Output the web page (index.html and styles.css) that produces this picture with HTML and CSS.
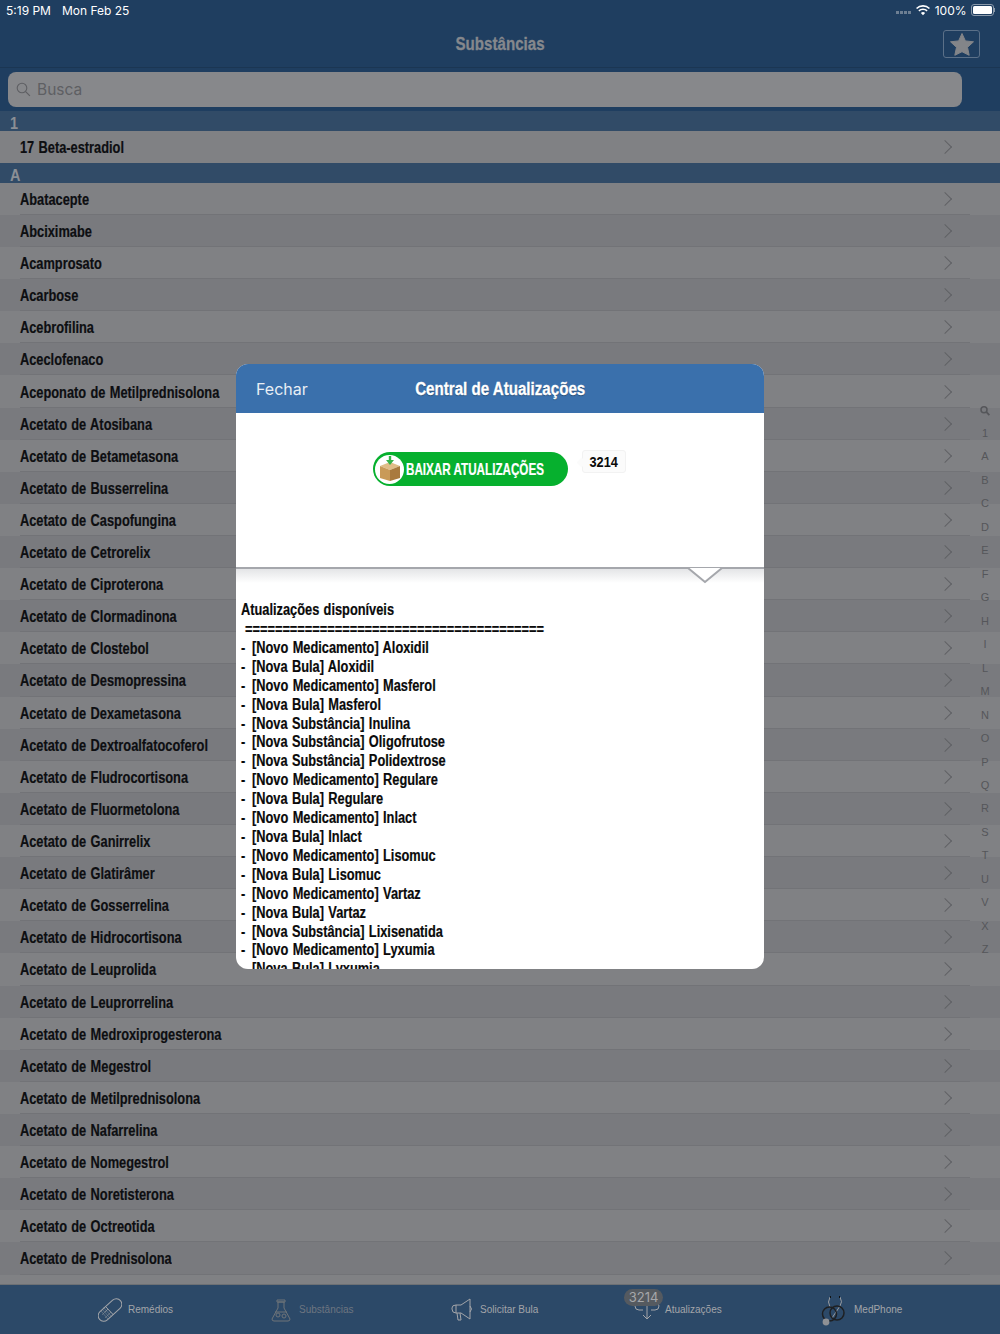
FILE: index.html
```html
<!DOCTYPE html>
<html lang="pt">
<head>
<meta charset="utf-8">
<title>Substâncias</title>
<link rel="stylesheet" href="styles.css">
</head>
<body>
<div class="app">
  <header class="top">
    <div class="status">
      <span class="time">5:19 PM</span><span class="date">Mon Feb 25</span>
      <span class="status-right">
        <span class="dots"><i></i><i></i><i></i><i></i></span>
        <svg class="wifi" width="14" height="11" viewBox="0 0 16 12"><path d="M8 11.5 5.6 8.8a3.4 3.4 0 0 1 4.8 0zM3.9 7.1 2.7 5.8a7.6 7.6 0 0 1 10.6 0l-1.2 1.3a5.8 5.8 0 0 0-8.2 0zM1.3 4.3 0 3a11.4 11.4 0 0 1 16 0l-1.3 1.3a9.6 9.6 0 0 0-13.4 0z" fill="#fff"/></svg>
        <span class="pct">100%</span>
        <span class="battery"><span class="battery-fill"></span></span><span class="battery-tip"></span>
      </span>
    </div>
    <div class="nav">
      <h1 class="nav-title">Substâncias</h1>
      <span class="fav">
        <svg width="24" height="23" viewBox="0 0 24 23"><path d="M12 .5l3.4 7.4 8.1.9-6 5.5 1.7 8L12 18.7l-7.2 3.6 1.7-8-6-5.5 8.1-.9z" fill="#838589" stroke="#838589" stroke-linejoin="round"/></svg>
      </span>
    </div>
    <div class="search-zone">
      <div class="search">
        <svg width="15" height="15" viewBox="0 0 15 15"><circle cx="6" cy="6" r="4.8" fill="none" stroke="#5e5f63" stroke-width="1.1"/><path d="M9.6 9.6l4.3 4.3" stroke="#5e5f63" stroke-width="1.2"/></svg>
        <span>Busca</span>
      </div>
    </div>
  </header>

  <main class="list">
    <div class="section"><span>1</span></div>
    <div class="row solo"><span>17 Beta-estradiol</span></div>
    <div class="section"><span>A</span></div>
    <div class="row"><span>Abatacepte</span></div>
    <div class="row"><span>Abciximabe</span></div>
    <div class="row"><span>Acamprosato</span></div>
    <div class="row"><span>Acarbose</span></div>
    <div class="row"><span>Acebrofilina</span></div>
    <div class="row"><span>Aceclofenaco</span></div>
    <div class="row"><span>Aceponato de Metilprednisolona</span></div>
    <div class="row"><span>Acetato de Atosibana</span></div>
    <div class="row"><span>Acetato de Betametasona</span></div>
    <div class="row"><span>Acetato de Busserrelina</span></div>
    <div class="row"><span>Acetato de Caspofungina</span></div>
    <div class="row"><span>Acetato de Cetrorelix</span></div>
    <div class="row"><span>Acetato de Ciproterona</span></div>
    <div class="row"><span>Acetato de Clormadinona</span></div>
    <div class="row"><span>Acetato de Clostebol</span></div>
    <div class="row"><span>Acetato de Desmopressina</span></div>
    <div class="row"><span>Acetato de Dexametasona</span></div>
    <div class="row"><span>Acetato de Dextroalfatocoferol</span></div>
    <div class="row"><span>Acetato de Fludrocortisona</span></div>
    <div class="row"><span>Acetato de Fluormetolona</span></div>
    <div class="row"><span>Acetato de Ganirrelix</span></div>
    <div class="row"><span>Acetato de Glatirâmer</span></div>
    <div class="row"><span>Acetato de Gosserrelina</span></div>
    <div class="row"><span>Acetato de Hidrocortisona</span></div>
    <div class="row"><span>Acetato de Leuprolida</span></div>
    <div class="row"><span>Acetato de Leuprorrelina</span></div>
    <div class="row"><span>Acetato de Medroxiprogesterona</span></div>
    <div class="row"><span>Acetato de Megestrol</span></div>
    <div class="row"><span>Acetato de Metilprednisolona</span></div>
    <div class="row"><span>Acetato de Nafarrelina</span></div>
    <div class="row"><span>Acetato de Nomegestrol</span></div>
    <div class="row"><span>Acetato de Noretisterona</span></div>
    <div class="row"><span>Acetato de Octreotida</span></div>
    <div class="row"><span>Acetato de Prednisolona</span></div>
  </main>

  <nav class="tabs">
    <div class="tab tab-1">
      <svg width="24" height="24" viewBox="0 0 24 24" fill="none" stroke="#a3a5a9" stroke-width="1"><rect x="-2" y="6.5" width="28" height="11" rx="5.5" transform="rotate(-42 12 12)"/><path d="M7.5 8.5l8 8.5"/><path d="M4 11l8 9M5.5 9.5l8 9M3 13l7 8M7 14l3-3M4 17l6-6M7 20l6-6" stroke-width=".6" opacity=".7"/></svg>
      <span>Remédios</span>
    </div>
    <div class="tab tab-2 dim">
      <svg width="20" height="24" viewBox="0 0 20 24" fill="none" stroke="#6f7479" stroke-width="1"><path d="M7 4v6L1 21q0 2 2 2h14q2 0 2-2l-6-11V4z"/><path d="M6 2h8v2H6z"/><circle cx="7" cy="17" r="2"/><circle cx="13" cy="18" r="2"/><path d="M4 14h12"/></svg>
      <span>Substâncias</span>
    </div>
    <div class="tab tab-3">
      <svg width="24" height="24" viewBox="0 0 24 24" fill="none" stroke="#a3a5a9" stroke-width="1"><path d="M6 7h5l9-6v20l-9-6H6a4 4 0 0 1-4-4V10q0-3 4-3z"/><path d="M20 8q3 3 0 6M7 15l1 7h3l-1-7M6 7v8"/></svg>
      <span>Solicitar Bula</span>
    </div>
    <div class="tab tab-4">
      <svg width="26" height="24" viewBox="0 0 26 24" fill="none" stroke="#a3a5a9" stroke-width="1"><path d="M9 4H5Q1 4 1 8t4 4h4M17 4h4q4 0 4 4t-4 4h-4M13 6v15M9 17l4 4 4-4"/></svg>
      <span>Atualizações</span>
      <span class="tab-badge">3214</span>
    </div>
    <div class="tab tab-5">
      <svg width="26" height="32" viewBox="0 0 26 32" fill="none"><path d="M9 3Q6 8 9 13M19 3q3 5 0 9L11 24" stroke="#9a9ca0"/><path d="M9 3h1M18 3h1" stroke="#111" stroke-width="2"/><circle cx="8.5" cy="20" r="7" stroke="#1e2023" stroke-width="1.5"/><circle cx="16" cy="19" r="7" stroke="#1e2023" stroke-width="1.5"/><circle cx="5" cy="28" r="3.4" fill="#8f9195"/></svg>
      <span>MedPhone</span>
    </div>
  </nav>

  <aside class="index">
    <svg width="10" height="10" viewBox="0 0 10 10"><circle cx="4" cy="4" r="3" fill="none" stroke="#55565a" stroke-width="1.5"/><path d="M6.2 6.2 9.4 9.4" stroke="#55565a" stroke-width="1.8"/></svg>
    <span>1</span><span>A</span><span>B</span><span>C</span><span>D</span><span>E</span><span>F</span><span>G</span><span>H</span><span>I</span><span>L</span><span>M</span><span>N</span><span>O</span><span>P</span><span>Q</span><span>R</span><span>S</span><span>T</span><span>U</span><span>V</span><span>X</span><span>Z</span>
  </aside>

  <section class="modal">
    <div class="modal-head">
      <span class="close">Fechar</span>
      <h2 class="modal-title">Central de Atualizações</h2>
    </div>
    <div class="modal-action">
      <div class="download">
        <span class="download-icon">
          <svg width="22" height="26" viewBox="0 0 22 26">
            <path d="M1 10 11 6l10 4-10 4z" fill="#e0bd88"/>
            <path d="M1 10l10 4v11L1 22z" fill="#c99a58"/>
            <path d="M21 10l-10 4v11l10-3z" fill="#a97a3e"/>
            <path d="M9.8 0h2.4v4H15l-4 5-4-5h2.8z" fill="#36b34a"/>
          </svg>
        </span>
        <span class="download-label">BAIXAR ATUALIZAÇÕES</span>
      </div>
      <span class="count"><span>3214</span></span>
    </div>
    <div class="divider">
      <svg class="notch" width="36" height="16" viewBox="0 0 36 16"><path d="M1 0 18 14 35 0z" fill="#fff"/><path d="M1 0 18 14 35 0" fill="none" stroke="#a5a7ac" stroke-width="2"/></svg>
    </div>
    <div class="updates">
      <p><span>Atualizações disponíveis</span></p>
      <p class="rule"><span>========================================</span></p>
      <p><span><i>-</i> [Novo Medicamento] Aloxidil</span></p>
      <p><span><i>-</i> [Nova Bula] Aloxidil</span></p>
      <p><span><i>-</i> [Novo Medicamento] Masferol</span></p>
      <p><span><i>-</i> [Nova Bula] Masferol</span></p>
      <p><span><i>-</i> [Nova Substância] Inulina</span></p>
      <p><span><i>-</i> [Nova Substância] Oligofrutose</span></p>
      <p><span><i>-</i> [Nova Substância] Polidextrose</span></p>
      <p><span><i>-</i> [Novo Medicamento] Regulare</span></p>
      <p><span><i>-</i> [Nova Bula] Regulare</span></p>
      <p><span><i>-</i> [Novo Medicamento] Inlact</span></p>
      <p><span><i>-</i> [Nova Bula] Inlact</span></p>
      <p><span><i>-</i> [Novo Medicamento] Lisomuc</span></p>
      <p><span><i>-</i> [Nova Bula] Lisomuc</span></p>
      <p><span><i>-</i> [Novo Medicamento] Vartaz</span></p>
      <p><span><i>-</i> [Nova Bula] Vartaz</span></p>
      <p><span><i>-</i> [Nova Substância] Lixisenatida</span></p>
      <p><span><i>-</i> [Novo Medicamento] Lyxumia</span></p>
      <p><span><i>-</i> [Nova Bula] Lyxumia</span></p>
    </div>
  </section>
</div>
</body>
</html>
```
FILE: styles.css
```css
* { box-sizing: border-box; }
html, body { margin: 0; padding: 0; }
body { width: 1000px; height: 1334px; overflow: hidden; font-family: "Liberation Sans", Arial, sans-serif; }
h1, h2, p { margin: 0; }

.app { position: relative; width: 1000px; height: 1334px; display: flex; flex-direction: column; overflow: hidden; background: #808184; }

.top { height: 111px; flex: none; background: #1f3e60; display: flex; flex-direction: column; }
.status { height: 20px; display: flex; align-items: center; padding: 0 5px 0 6px; color: #fff; font-size: 12px; font-family: "Inter", "Liberation Sans", sans-serif; }
.date { margin-left: 11px; }
.status-right { margin-left: auto; display: flex; align-items: center; }
.dots { display: flex; gap: 1.5px; margin-right: 5px; margin-top: 5px; }
.dots i { width: 2.5px; height: 2.5px; background: #6d7f93; display: block; }
.wifi { margin-right: 5px; }
.pct { margin-right: 4px; }
.battery { width: 23px; height: 12px; border: 1px solid #8a99aa; border-radius: 3px; padding: 1px; display: block; }
.battery-fill { display: block; width: 100%; height: 100%; background: #fff; border-radius: 1.5px; }
.battery-tip { width: 1.5px; height: 4px; background: #8a99aa; display: block; }

.nav { height: 48px; display: flex; align-items: center; justify-content: center; position: relative; border-bottom: 1px solid #1b3653; }
.nav-title { font-size: 18px; font-weight: 700; color: #85888d; margin-top: 1px; transform: scaleX(.84); white-space: nowrap; -webkit-text-stroke: .3px #85888d; }
.fav { position: absolute; right: 20px; top: 10px; width: 37px; height: 28px; border: 1px solid #5b7088; border-radius: 3px; display: flex; align-items: center; justify-content: center; }

.search-zone { flex: 1; padding: 4px 38px 3px 8px; }
.search { height: 35px; background: #87888b; border-radius: 8px; display: flex; align-items: center; gap: 6px; padding: 0 0 1px 8px; color: #5e5f63; font-size: 15.5px; font-family: "Inter", "Liberation Sans", sans-serif; }

.list { flex: 1; min-height: 0; overflow: hidden; }
.section { height: 20px; background: #314b67; color: #8b8f95; font: 700 17px/20px "Liberation Sans", sans-serif; padding-left: 10px; }
.section span { display: inline-block; transform: translateY(2.5px) scaleX(.85); transform-origin: left center; }
.section + .row + .section { height: 19.7px; }
.row { height: 32.12px; padding: 2px 0 0 19.5px; display: flex; align-items: center; position: relative; color: #0d0e11; font: 700 16px "Liberation Sans", sans-serif; background: #808184; word-spacing: 1px; }
.row span { display: inline-block; white-space: nowrap; transform: scaleX(.8); transform-origin: left center; -webkit-text-stroke: .2px #0d0e11; }
.row:nth-child(odd) { background: #797a7e; }
.row::before { content: ""; position: absolute; left: 20px; right: 30px; bottom: 0; height: 1px; background: #727377; }
.row.solo::before { display: none; }
.row::after { content: ""; position: absolute; left: 939.6px; top: 50%; width: 9px; height: 9px; margin-top: -5px; border-top: 1px solid #606165; border-right: 1px solid #606165; transform: rotate(45deg); }

.tabs { height: 50px; flex: none; background: #2c4968; border-top: 1px solid #6d7074; position: relative; display: flex; }
.tab { position: absolute; top: 0; height: 49px; display: flex; align-items: center; gap: 6px; color: #a3a5a9; font-size: 10px; font-family: "Liberation Sans", sans-serif; }
.tab.dim { color: #6d7580; }
.tab-1 { left: 98px; }
.tab-2 { left: 271px; gap: 8px; }
.tab-3 { left: 450px; gap: 6px; }
.tab-4 { left: 634px; gap: 5px; }
.tab-5 { left: 821px; gap: 7px; }
.tab-badge { position: absolute; left: -10px; top: 4px; width: 39px; height: 17px; border-radius: 9px; background: #555a60; color: #a5a7aa; font: 13px/17px "Inter", sans-serif; text-align: center; }

.index { position: absolute; right: 7px; top: 398.5px; width: 16px; display: flex; flex-direction: column; align-items: center; color: #55565a; font-size: 11px; font-family: "Liberation Sans", sans-serif; }
.index svg { height: 23.48px; }
.index span { height: 23.48px; line-height: 23.48px; }

.modal { position: absolute; left: 236px; top: 364px; width: 528px; height: 605px; background: #fff; border-radius: 12px; overflow: hidden; display: flex; flex-direction: column; }
.modal-head { height: 49px; flex: none; background: #3a70ac; display: flex; align-items: center; justify-content: center; position: relative; }
.close { position: absolute; left: 20px; top: 15px; color: #e8eef5; font-size: 16px; font-family: "Inter", "Liberation Sans", sans-serif; }
.modal-title { color: #fff; font: 700 18px "Liberation Sans", sans-serif; transform: scaleX(.84); white-space: nowrap; margin-top: 1px; text-shadow: 0 1px 1px rgba(0,0,0,.35); -webkit-text-stroke: .3px #fff; }
.modal-action { height: 156px; flex: none; position: relative; border-bottom: 2px solid #a5a7ac; }
.download { position: absolute; left: 137px; top: 39px; width: 195px; height: 34px; background: #06b02e; border-radius: 17px; display: flex; align-items: center; padding-left: 2px; }
.download-icon { width: 29px; height: 29px; border-radius: 50%; background: #fff; display: flex; align-items: center; justify-content: center; flex: none; }
.download-label { color: #fff; font: 700 17px "Liberation Sans", sans-serif; margin: 1px 0 0 2px; white-space: nowrap; display: inline-block; transform: scaleX(.686); transform-origin: left center; -webkit-text-stroke: .2px #fff; }
.count { position: absolute; left: 346px; top: 37px; width: 44px; height: 23px; background: #fbfbfb; border: 1px solid #f2f2f2; border-radius: 3px; font: 700 15px/21px "Liberation Sans", sans-serif; text-align: center; color: #0a0a0a; }
.count span { display: inline-block; transform: scaleX(.85); }
.count::before { content: ""; position: absolute; left: -5px; top: 8px; width: 7px; height: 7px; background: #fbfbfb; transform: rotate(45deg); }
.divider { height: 14px; flex: none; position: relative; background: linear-gradient(#e4e5e7, #fff); }
.notch { position: absolute; left: 451px; top: -1px; display: block; }
.updates { padding: 18px 5px 0; color: #0a0a0a; font: 700 16px/18.9px "Liberation Sans", sans-serif; flex: 1; min-height: 0; overflow: hidden; white-space: nowrap; word-spacing: 1px; }
.updates span { display: inline-block; transform: scaleX(.8); transform-origin: left center; -webkit-text-stroke: .2px #0a0a0a; }
.updates i { font-style: normal; margin-right: 3px; }
.updates .rule { padding-left: 4px; line-height: 19px; }
```
